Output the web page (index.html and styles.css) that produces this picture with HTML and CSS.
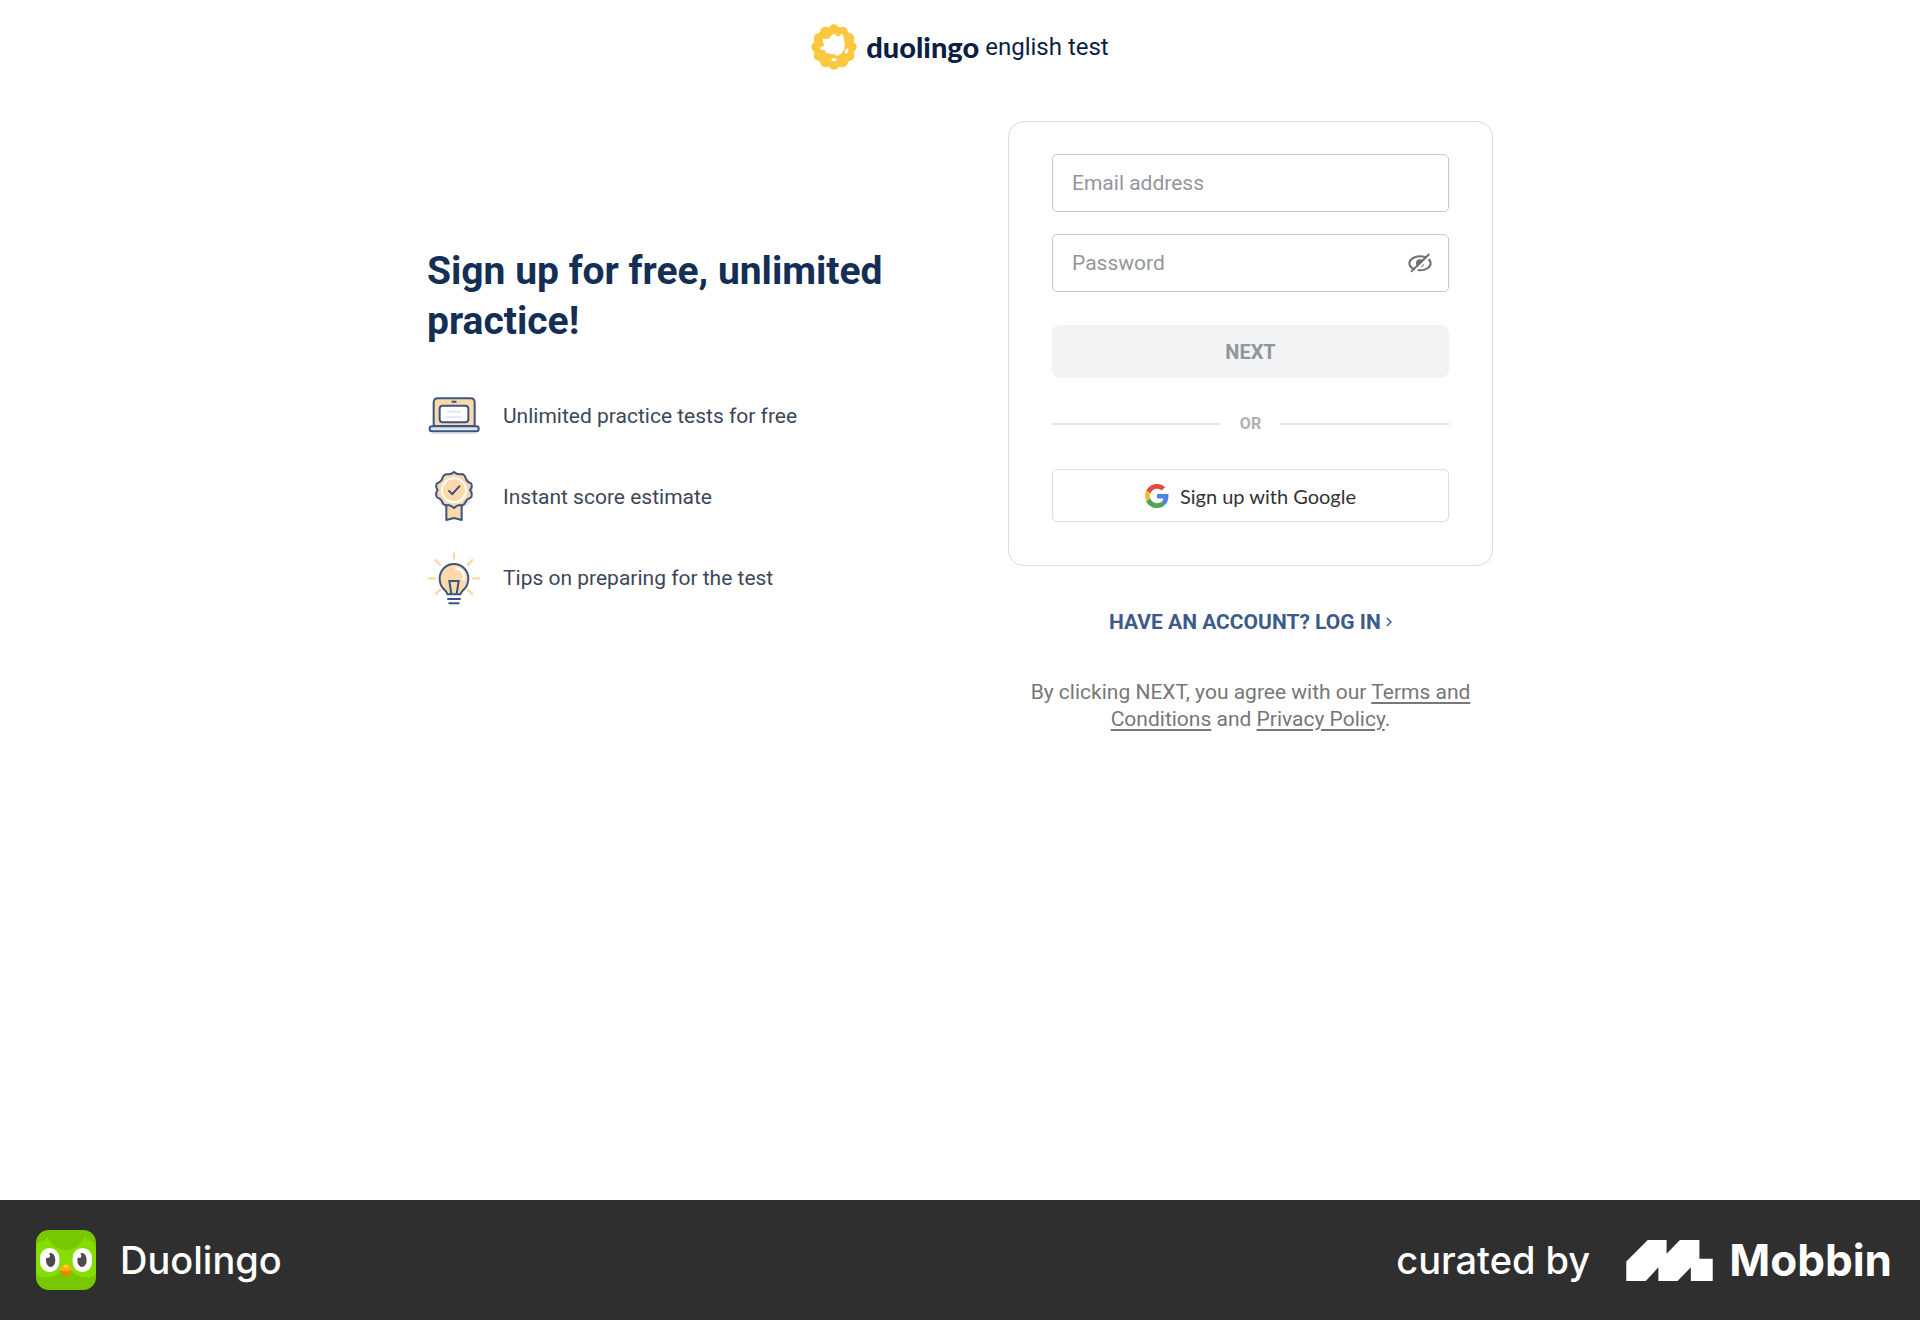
FILE: index.html
```html
<!DOCTYPE html>
<html lang="en">
<head>
<meta charset="utf-8">
<meta name="viewport" content="width=device-width, initial-scale=1">
<title>Duolingo English Test - Sign up</title>
<link rel="stylesheet" href="styles.css">
</head>
<body>
<header class="header">
  <a class="brand" href="#">
    <svg class="brand-badge" viewBox="0 0 138 138" aria-hidden="true">
      <g fill="#fac83f">
        <circle cx="69" cy="69" r="62"/>
        <circle cx="69" cy="16" r="15"/><circle cx="95.500" cy="23" r="15"/><circle cx="115" cy="42.500" r="15"/>
        <circle cx="122" cy="69" r="15"/><circle cx="115" cy="95.500" r="15"/><circle cx="95.500" cy="115" r="15"/>
        <circle cx="69" cy="122" r="15"/><circle cx="42.500" cy="115" r="15"/><circle cx="23" cy="95.500" r="15"/>
        <circle cx="16" cy="69" r="15"/><circle cx="23" cy="42.500" r="15"/><circle cx="42.500" cy="23" r="15"/>
      </g>
      <g fill="#fff">
        <path d="M35 46Q34 42 40 44Q49 47 55 43Q59 32 69 29Q74 28 78 37Q82 39 86 36Q92 28 95 31Q98 39 99 48Q103 60 100 73Q96 87 83 94Q75 97 70 90Q52 92 42 84Q40 81 45 78Q34 80 28 74Q26 70 33 68Q38 66 40 62Q35 54 35 46Z"/>
        <ellipse cx="107" cy="81" rx="5" ry="8" transform="rotate(20 107 81)"/>
        <ellipse cx="69" cy="107" rx="8" ry="5"/>
      </g>
    </svg>
    <span class="brand-name">duolingo</span>
    <span class="brand-product">english test</span>
  </a>
</header>

<main class="main">
  <section class="pitch">
    <h1 class="pitch-title">Sign up for free, unlimited practice!</h1>
    <ul class="benefits">
      <li class="benefit">
        <svg class="benefit-icon" viewBox="0 0 156 156" aria-hidden="true">
          <rect x="14" y="128" width="136" height="5" rx="2" fill="#dfe6f2"/>
          <path d="M20 108V38Q20 25 33 25H130Q143 25 143 38V108Z" fill="#fbd9ab" stroke="#3c5580" stroke-width="6"/>
          <rect x="38" y="47" width="86" height="50" rx="9" fill="#fff" stroke="#3c5580" stroke-width="6"/>
          <path d="M60 65H102M56 81H106" stroke="#dfe3ee" stroke-width="5"/>
          <path d="M76 35H86" stroke="#3c5580" stroke-width="6" stroke-linecap="round"/>
          <rect x="8" y="109" width="147" height="15" rx="7" fill="#dce5f3" stroke="#3c5580" stroke-width="6"/>
        </svg>
        <span>Unlimited practice tests for free</span>
      </li>
      <li class="benefit">
        <svg class="benefit-icon" viewBox="0 0 156 156" aria-hidden="true">
          <circle cx="83" cy="62" r="56" fill="#e3e9f4"/>
          <path d="M58 98V147L81 141L104 147V98Z" fill="#fbd9ab" stroke="#3c5580" stroke-width="6" stroke-linejoin="round"/>
          <path d="M81 3Q91 12 104 9Q113 10 116 22Q120 33 132 37Q138 47 129 57Q138 68 132 79Q119 83 115 94Q110 105 98 102Q89 103 81 111Q72 103 63 102Q51 105 46 94Q43 83 30 79Q24 68 32 57Q24 47 30 37Q43 33 46 22Q50 9 62 10Q73 11 81 3Z" fill="#fbd9ab" stroke="#3c5580" stroke-width="6" stroke-linejoin="round"/>
          <circle cx="81" cy="58" r="36" fill="none" stroke="#fff" stroke-width="6"/>
          <path d="M66 60L76 69L97 46" fill="none" stroke="#3c5580" stroke-width="6" stroke-linecap="round"/>
        </svg>
        <span>Instant score estimate</span>
      </li>
      <li class="benefit">
        <svg class="benefit-icon" viewBox="0 0 156 156" aria-hidden="true">
          <path d="M81 2V23M2 79H26M135 79H159M24 22L41 40M138 22L121 40M24 128L41 112M138 128L121 112" stroke="#fbd9ab" stroke-width="7"/>
          <path d="M62 127Q58 118 48 109Q38 98 38 79A43 43 0 0 1 124 79Q124 98 114 109Q104 118 100 127Z" fill="#fbd9ab" stroke="#3c5580" stroke-width="6" stroke-linejoin="round"/>
          <path d="M85 49Q105 50 111 68Q112 78 109 85" fill="none" stroke="#fff" stroke-width="8"/>
          <path d="M73 126L67 87H95L89 126" fill="none" stroke="#3c5580" stroke-width="6"/>
          <path d="M63 141H99M67 154H95" stroke="#3c5580" stroke-width="6" stroke-linecap="round"/>
        </svg>
        <span>Tips on preparing for the test</span>
      </li>
    </ul>
  </section>

  <section class="signup">
    <form class="card">
      <div class="field">
        <input class="field-input" type="email" placeholder="Email address" aria-label="Email address">
      </div>
      <div class="field">
        <input class="field-input" type="password" placeholder="Password" aria-label="Password">
        <button class="reveal" type="button" aria-label="Show password">
          <svg viewBox="0 0 72 60" aria-hidden="true">
            <ellipse cx="36" cy="31" rx="32" ry="21" fill="none" stroke="#707070" stroke-width="6"/>
            <circle cx="36" cy="31" r="12" fill="#707070"/>
            <path d="M14 61L70 5" stroke="#fff" stroke-width="7"/>
            <path d="M9 56L64 3" stroke="#707070" stroke-width="6"/>
          </svg>
        </button>
      </div>
      <button class="next" type="submit" disabled>NEXT</button>
      <div class="divider"><span>OR</span></div>
      <button class="google" type="button">
        <svg class="google-icon" viewBox="0 0 48 48" aria-hidden="true">
          <path fill="#dc4e41" d="M24 9.500c3.540 0 6.710 1.220 9.210 3.600l6.850-6.850C35.900 2.380 30.470 0 24 0 14.620 0 6.510 5.380 2.560 13.220l7.980 6.190C12.430 13.720 17.740 9.500 24 9.500z"/>
          <path fill="#4f82e8" d="M46.980 24.550c0-1.570-.15-3.090-.38-4.550H24v9.020h12.940c-.58 2.960-2.260 5.480-4.780 7.180l7.730 6c4.510-4.180 7.090-10.360 7.090-17.650z"/>
          <path fill="#efbe3b" d="M10.530 28.590c-.48-1.450-.76-2.990-.76-4.590s.27-3.140.76-4.590l-7.980-6.190C.92 16.460 0 20.120 0 24c0 3.880.92 7.540 2.560 10.780l7.970-6.190z"/>
          <path fill="#4ca55a" d="M24 48c6.480 0 11.930-2.130 15.890-5.810l-7.730-6c-2.150 1.450-4.920 2.300-8.160 2.300-6.260 0-11.570-4.220-13.470-9.910l-7.980 6.190C6.510 42.620 14.620 48 24 48z"/>
        </svg>
        <span>Sign up with Google</span>
      </button>
    </form>
    <a class="login" href="#">HAVE AN ACCOUNT? LOG IN
      <svg class="login-arrow" viewBox="0 0 6 10" aria-hidden="true"><path d="M1 1L5 5L1 9" fill="none" stroke="#3c5a8a" stroke-width="1.500"/></svg>
    </a>
    <p class="terms">By clicking NEXT, you agree with our <a href="#">Terms and Conditions</a> and <a href="#">Privacy Policy</a>.</p>
  </section>
</main>

<footer class="footer">
  <div class="app">
    <svg class="app-icon" viewBox="0 0 180 180" aria-hidden="true">
      <rect width="180" height="180" rx="38" fill="#78c800"/>
      <path d="M0 60Q2 42 10 35Q16 30 26 32Q28 24 34 20Q44 40 64 54Q90 66 116 54Q136 40 146 20Q152 24 154 32Q164 30 170 35Q178 42 180 60V128Q172 142 152 142Q112 142 106 118H74Q68 142 28 142Q8 142 0 128Z" fill="#86de00"/>
      <rect x="12" y="54" width="58" height="72" rx="29" fill="#fff"/>
      <rect x="110" y="54" width="58" height="72" rx="29" fill="#fff"/>
      <ellipse cx="44" cy="90" rx="14" ry="21" fill="#4b4b4b"/>
      <ellipse cx="138" cy="90" rx="14" ry="21" fill="#4b4b4b"/>
      <circle cx="35" cy="77" r="7" fill="#fff"/>
      <circle cx="129" cy="77" r="7" fill="#fff"/>
      <path d="M76 120H104L101 134Q90 141 79 134Z" fill="#f48000"/>
      <path d="M72 116Q78 104 90 103Q102 104 108 116Q106 124 90 124Q74 124 72 116Z" fill="#ffb100"/>
      <ellipse cx="90" cy="109" rx="8" ry="5" fill="#ffd040"/>
    </svg>
    <span class="app-name">Duolingo</span>
  </div>
  <div class="credit">
    <span class="credit-text">curated by</span>
    <svg class="credit-logo" viewBox="0 0 253 120" aria-hidden="true"><path fill="#fff" d="M0 63L63 0H118V40L157 0H214V55H253V120H189V80L150 120H94V80L57 120H0Z"/></svg>
    <span class="credit-name">Mobbin</span>
  </div>
</footer>
</body>
</html>
```

FILE: styles.css
```css
*, *::before, *::after { box-sizing: border-box; }

body {
  margin: 0;
  min-height: 100vh;
  display: flex;
  flex-direction: column;
  background: #fff;
  color: #3c4758;
  font-family: Roboto, "Liberation Sans", sans-serif;
  font-size: 21px;
}

button, input { font: inherit; }

.header {
  display: flex;
  justify-content: center;
  padding: 24px;
}

.brand {
  display: flex;
  align-items: center;
  color: #0b1f41;
  text-decoration: none;
}

.brand-badge { width: 46px; height: 46px; margin-right: 9px; }

.brand-name {
  font-family: Lato, sans-serif;
  font-size: 29px;
  line-height: 36px;
  font-weight: 900;
  margin-right: 6px;
}

.brand-product { font-size: 24px; line-height: 36px; }

.main {
  flex: 1;
  display: grid;
  grid-template-columns: 1fr 1fr;
  gap: 96px;
  align-items: center;
  align-content: start;
  width: 100%;
  max-width: 1114px;
  margin: 0 auto;
  padding: 27px 24px;
}

.pitch { padding-bottom: 4px; }

.pitch-title {
  margin: 0 0 44px;
  color: #142f56;
  font-size: 39px;
  line-height: 50px;
  font-weight: 700;
}

.benefits {
  display: grid;
  gap: 29px;
  margin: 0;
  padding: 0;
  list-style: none;
}

.benefit { display: flex; align-items: center; gap: 24px; }

.benefit-icon { width: 52px; height: 52px; overflow: visible; }

.signup {
  display: flex;
  flex-direction: column;
  align-items: center;
}

.card {
  width: 100%;
  padding: 32px 43px 43px;
  border: 1px solid #dadcde;
  border-radius: 16px;
}

.field { position: relative; margin-bottom: 22px; }

.field-input {
  display: block;
  width: 100%;
  height: 58px;
  padding: 0 19px;
  border: 1px solid #c6c9cb;
  border-radius: 5px;
  background: #fff;
  color: #3c4758;
}

.field-input::placeholder { color: #94969d; opacity: 1; }

.reveal {
  position: absolute;
  top: 17px;
  right: 17px;
  width: 24px;
  height: 24px;
  padding: 0;
  border: 0;
  background: none;
}

.reveal svg { display: block; width: 24px; height: 20px; }

.next {
  display: block;
  width: 100%;
  height: 53px;
  margin-top: 33px;
  border: 0;
  border-radius: 8px;
  background: #f1f3f5;
  color: #92969c;
  font-size: 20px;
  font-weight: 700;
}

.divider {
  display: flex;
  align-items: center;
  gap: 20px;
  margin: 35px 0;
  color: #aeb0b4;
  font-size: 16px;
  line-height: 21px;
  font-weight: 700;
}

.divider::before, .divider::after {
  content: "";
  flex: 1;
  height: 2px;
  background: #e3e5e6;
}

.google {
  display: flex;
  align-items: center;
  justify-content: center;
  gap: 11px;
  width: 100%;
  height: 53px;
  border: 1px solid #dadcde;
  border-radius: 5px;
  background: #fff;
  color: #333;
  font-family: Lato, sans-serif;
  font-size: 20px;
}

.google-icon { width: 24px; height: 24px; }

.login {
  margin-top: 43px;
  color: #3c5a8a;
  font-size: 21px;
  line-height: 27px;
  font-weight: 700;
  text-decoration: none;
}

.login-arrow { width: 6px; height: 10px; margin-bottom: 2px; }

.terms {
  margin: 43px 0 0;
  padding: 0 16px;
  color: #777;
  line-height: 27px;
  text-align: center;
}

.terms a { color: inherit; text-underline-offset: 3px; }

.footer {
  display: flex;
  align-items: center;
  justify-content: space-between;
  min-height: 120px;
  padding: 0 28px 0 36px;
  background: #2f2f2f;
  color: #fff;
  font-family: Inter, sans-serif;
  font-weight: 500;
  font-size: 38px;
}

.app, .credit { display: flex; align-items: center; }

.app-icon { width: 60px; height: 60px; margin-right: 24px; }

.credit-logo { width: 87px; height: 41px; margin: 0 16px 0 36px; }

.credit-name { font-size: 44px; font-weight: 700; }
```
